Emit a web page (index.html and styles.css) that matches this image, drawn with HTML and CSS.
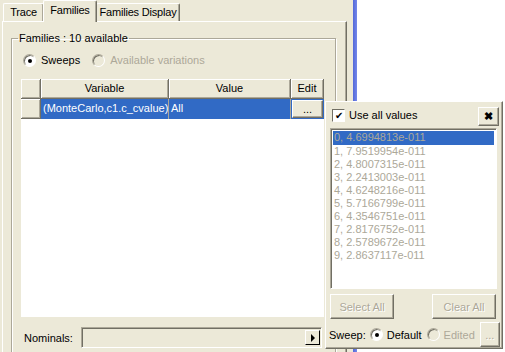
FILE: index.html
```html
<!DOCTYPE html>
<html lang="en">
<head>
    <meta charset="UTF-8">
    <title>Families</title>
    <link rel="stylesheet" href="styles.css">
</head>
<body>
    <div class="window">
        <div class="pane">
            <div class="tabs">
                <div class="tab tab-trace">Trace</div>
                <div class="tab active">Families</div>
                <div class="tab tab-display">Families Display</div>
            </div>
            <div class="tabpanel">
                <fieldset class="group">
                    <legend>Families : 10 available</legend>
                    <div class="radios">
                        <label class="radio"><span class="dot on"></span>Sweeps</label>
                        <label class="radio disabled"><span class="dot"></span>Available variations</label>
                    </div>
                    <div class="grid">
                        <div class="grid-row head">
                            <div class="cell rowhead"></div>
                            <div class="cell col-var">Variable</div>
                            <div class="cell col-val">Value</div>
                            <div class="cell col-edit">Edit</div>
                        </div>
                        <div class="grid-row selected">
                            <div class="cell rowhead"></div>
                            <div class="cell col-var">(MonteCarlo,c1.c_cvalue)</div>
                            <div class="cell col-val">All</div>
                            <div class="cell col-edit"><span class="btn small">...</span></div>
                        </div>
                    </div>
                    <div class="nominals">
                        <span class="nom-label">Nominals:</span>
                        <div class="nom-field"><span class="arrow-btn"><span class="tri"></span></span></div>
                    </div>
                </fieldset>
            </div>
        </div>
        <div class="edge"></div>
        <div class="blank"></div>
    </div>

    <div class="popup">
        <div class="pop-top">
            <label class="check"><span class="box">&#10004;</span>Use all values</label>
            <span class="btn close">&#10006;</span>
        </div>
        <div class="list">
            <div class="item sel">0, 4.6994813e-011</div>
            <div class="item">1, 7.9519954e-011</div>
            <div class="item">2, 4.8007315e-011</div>
            <div class="item">3, 2.2413003e-011</div>
            <div class="item">4, 4.6248216e-011</div>
            <div class="item">5, 5.7166799e-011</div>
            <div class="item">6, 4.3546751e-011</div>
            <div class="item">7, 2.8176752e-011</div>
            <div class="item">8, 2.5789672e-011</div>
            <div class="item">9, 2.8637117e-011</div>
        </div>
        <div class="pop-buttons">
            <span class="btn wide disabled">Select All</span>
            <span class="btn wide disabled">Clear All</span>
        </div>
        <div class="sweep">
            <span class="sweep-label">Sweep:</span>
            <label class="radio"><span class="dot on"></span>Default</label>
            <label class="radio disabled"><span class="dot"></span>Edited</label>
            <span class="btn dots disabled">...</span>
        </div>
    </div>
</body>
</html>
```

FILE: styles.css
```css
body {
    margin: 0;
    font-family: "Liberation Sans", Arial, sans-serif;
    font-size: 11px;
    color: #000;
    background-color: #fff;
    width: 505px;
    height: 352px;
    overflow: hidden;
    position: relative;
}
.window {
    display: flex;
    height: 352px;
}
.pane {
    width: 353px;
    background-color: #ece9d8;
    padding-left: 2px;
    box-sizing: border-box;
}
.edge {
    width: 4px;
    background: linear-gradient(to right, #5468d8, #7488ea);
}
.blank {
    flex: 1;
    background-color: #fff;
}
.tabs {
    display: flex;
    align-items: flex-end;
    height: 21px;
    padding-left: 1px;
}
.tab {
    height: 17px;
    line-height: 17px;
    box-sizing: content-box;
    text-align: center;
    border: 1px solid #fff;
    border-bottom: none;
    border-right: 1px solid #716f64;
    border-radius: 2px 2px 0 0;
    box-shadow: inset -1px 0 0 #aca899;
    white-space: nowrap;
    letter-spacing: -0.2px;
}
.tab-trace {
    width: 39px;
}
.tab-display {
    width: 82px;
}
.tab.active {
    width: 52px;
    height: 21px;
    line-height: 18px;
    margin: 0 -1px -1px -1px;
    position: relative;
    z-index: 1;
    background-color: #ece9d8;
}
.tabpanel {
    width: 345px;
    height: 331px;
    overflow: hidden;
    border: 1px solid #fff;
    border-bottom: none;
    border-right: 1px solid #716f64;
    box-shadow: inset -1px 0 0 #aca899;
    box-sizing: border-box;
    padding: 10px 10px 0 8px;
}
.group {
    margin: 0;
    padding: 0 10px 0 9px;
    height: 330px;
    border: 1px solid #aca899;
    box-shadow: inset 1px 1px 0 #fff, 1px 1px 0 #fff;
}
.group legend {
    padding: 0 1px;
    margin-left: -3px;
}
.radios {
    display: flex;
    height: 26px;
    align-items: center;
    padding-left: 2px;
    margin-top: 3px;
}
.radio {
    display: inline-flex;
    align-items: center;
    margin-right: 12px;
    white-space: nowrap;
}
.radio.disabled {
    color: #aca899;
}
.dot {
    width: 11px;
    height: 11px;
    flex: none;
    border-radius: 50%;
    border: 1px solid #aca899;
    border-right-color: #fff;
    border-bottom-color: #fff;
    box-shadow: inset 1px 1px 0 #716f64;
    background-color: #fff;
    margin-right: 5px;
    position: relative;
}
.dot.on::after {
    content: "";
    position: absolute;
    left: 4px;
    top: 4px;
    width: 4px;
    height: 4px;
    border-radius: 50%;
    background-color: #000;
}
.radio.disabled .dot {
    background-color: #ece9d8;
}
.grid {
    width: 303px;
    height: 238px;
    background-color: #fff;
    margin-top: 6px;
}
.grid-row {
    display: flex;
    height: 20px;
}
.cell {
    box-sizing: border-box;
    height: 20px;
    line-height: 19px;
    white-space: nowrap;
    overflow: hidden;
}
.rowhead {
    width: 20px;
    background-color: #ece9d8;
    border-right: 1px solid #716f64;
    border-bottom: 1px solid #716f64;
    box-shadow: inset 1px 1px 0 #fff, inset -1px -1px 0 #aca899;
}
.head .cell {
    background-color: #ece9d8;
    text-align: center;
    border-right: 1px solid #716f64;
    border-bottom: 1px solid #716f64;
    box-shadow: inset 1px 1px 0 #fff, inset -1px -1px 0 #aca899;
}
.col-var {
    width: 128px;
}
.col-val {
    width: 122px;
}
.col-edit {
    width: 33px;
}
.selected .col-var,
.selected .col-val {
    background-color: #316ac5;
    color: #fff;
    padding-left: 2px;
    border-right: 1px solid #aca899;
}
.selected .col-edit {
    background-color: #316ac5;
    padding: 1px;
}
.btn {
    display: inline-flex;
    align-items: center;
    justify-content: center;
    box-sizing: border-box;
    flex: none;
    background-color: #ece9d8;
    border: 1px solid #fff;
    border-right-color: #716f64;
    border-bottom-color: #716f64;
    box-shadow: inset -1px -1px 0 #aca899;
}
.btn.small {
    width: 31px;
    height: 18px;
    line-height: 14px;
}
.btn.disabled {
    color: #aca899;
    text-shadow: 1px 1px 0 #fff;
}
.nominals {
    display: flex;
    align-items: center;
    margin-top: 10px;
    padding-left: 3px;
}
.nom-label {
    width: 57px;
}
.nom-field {
    width: 241px;
    height: 21px;
    box-sizing: border-box;
    border: 1px solid #aca899;
    border-right-color: #fff;
    border-bottom-color: #fff;
    box-shadow: inset 1px 1px 0 #716f64;
    display: flex;
    justify-content: flex-end;
    align-items: center;
    padding-right: 1px;
}
.arrow-btn {
    width: 15px;
    height: 15px;
    box-sizing: border-box;
    border: 1px solid #fff;
    border-right-color: #000;
    border-bottom-color: #000;
    display: flex;
    align-items: center;
    justify-content: center;
}
.tri {
    width: 0;
    height: 0;
    border-left: 4px solid #000;
    border-top: 4px solid transparent;
    border-bottom: 4px solid transparent;
    margin-left: 1px;
}
.popup {
    position: absolute;
    left: 325px;
    top: 101px;
    width: 178px;
    height: 248px;
    box-sizing: border-box;
    background-color: #ece9d8;
    border: 1px solid #fff;
    border-right-color: #716f64;
    border-bottom-color: #716f64;
    box-shadow: inset -1px -1px 0 #aca899;
    padding: 2px 5px 0 4px;
}
.pop-top {
    display: flex;
    justify-content: space-between;
    align-items: center;
    height: 22px;
}
.check {
    display: inline-flex;
    align-items: center;
    padding-left: 2px;
}
.box {
    width: 13px;
    height: 13px;
    box-sizing: border-box;
    border: 1px solid #716f64;
    border-right-color: #fff;
    border-bottom-color: #fff;
    background-color: #fff;
    font-size: 10px;
    line-height: 11px;
    text-align: center;
    margin-right: 4px;
}
.btn.close {
    width: 21px;
    height: 19px;
    font-size: 11px;
    font-weight: bold;
    margin-right: -2px;
    margin-top: 2px;
}
.list {
    margin-top: 2px;
    height: 161px;
    box-sizing: border-box;
    background-color: #fff;
    border: 1px solid #aca899;
    border-right-color: #fff;
    border-bottom-color: #fff;
    box-shadow: inset 1px 1px 0 #716f64;
    padding: 2px 2px 0 2px;
    width: 167px;
}
.item {
    height: 13px;
    line-height: 13px;
    color: #aca899;
    padding-left: 1px;
}
.item.sel {
    background-color: #316ac5;
    height: 14px;
}
.pop-buttons {
    display: flex;
    justify-content: space-between;
    margin-top: 5px;
    width: 166px;
}
.btn.wide {
    width: 64px;
    height: 25px;
}
.sweep {
    display: flex;
    align-items: center;
    margin: 3px 0 0 -1px;
    height: 25px;
    width: 168px;
    white-space: nowrap;
}
.sweep-label {
    margin-right: 4px;
}
.sweep .radio {
    margin-right: 5px;
}
.sweep .dot {
    margin-right: 4px;
}
.btn.dots {
    width: 20px;
    height: 25px;
    margin-left: auto;
}
```
